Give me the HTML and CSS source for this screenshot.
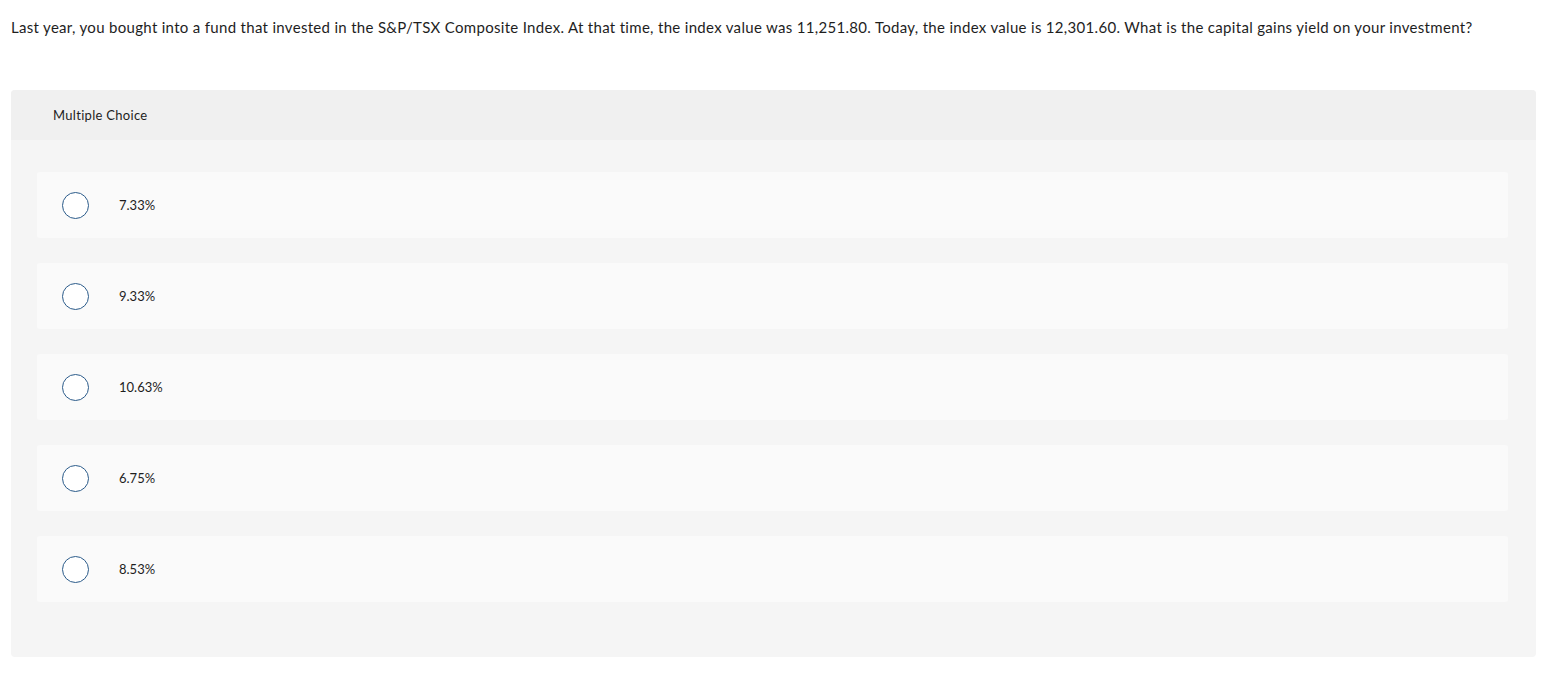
FILE: index.html
```html
<!DOCTYPE html>
<html>
<head>
<meta charset="utf-8">
<link rel="stylesheet" href="styles.css">
</head>
<body>
<div class="page">
  <p class="question">Last year, you bought into a fund that invested in the S&amp;P/TSX Composite Index. At that time, the index value was 11,251.80. Today, the index value is 12,301.60. What is the capital gains yield on your investment?</p>
  <div class="mc">
    <div class="mc-head">Multiple Choice</div>
    <div class="mc-body">
      <div class="opt"><span class="radio"></span><span class="label">7.33%</span></div>
      <div class="opt"><span class="radio"></span><span class="label">9.33%</span></div>
      <div class="opt"><span class="radio"></span><span class="label">10.63%</span></div>
      <div class="opt"><span class="radio"></span><span class="label">6.75%</span></div>
      <div class="opt"><span class="radio"></span><span class="label">8.53%</span></div>
    </div>
  </div>
</div>
</body>
</html>
```
FILE: styles.css
```css
html, body { margin: 0; padding: 0; background: #fff; }
body { font-family: "Lato", "Liberation Sans", sans-serif; color: #1e1e1e; }
.page { padding: 0 16px 0 11px; }
.question { margin: 0; padding-top: 17px; font-size: 15px; line-height: 20px; letter-spacing: 0.31px; }
.mc { margin-top: 53px; background: #f5f5f5; border-radius: 4px; overflow: hidden; }
.mc-head { height: 50px; background: #f0f0f0; display: flex; align-items: center; padding-left: 42px; font-size: 13px; letter-spacing: 0.3px; }
.mc-body { padding: 32px 28px 55px 26px; display: flex; flex-direction: column; gap: 25px; }
.opt { height: 66px; background: #fafafa; border-radius: 3px; display: flex; align-items: center; padding-left: 25px; }
.radio { width: 25px; height: 25px; border: 1.5px solid #2b5b8a; border-radius: 50%; background: #fff; flex: none; }
.label { margin-left: 30px; font-size: 13px; }
```
